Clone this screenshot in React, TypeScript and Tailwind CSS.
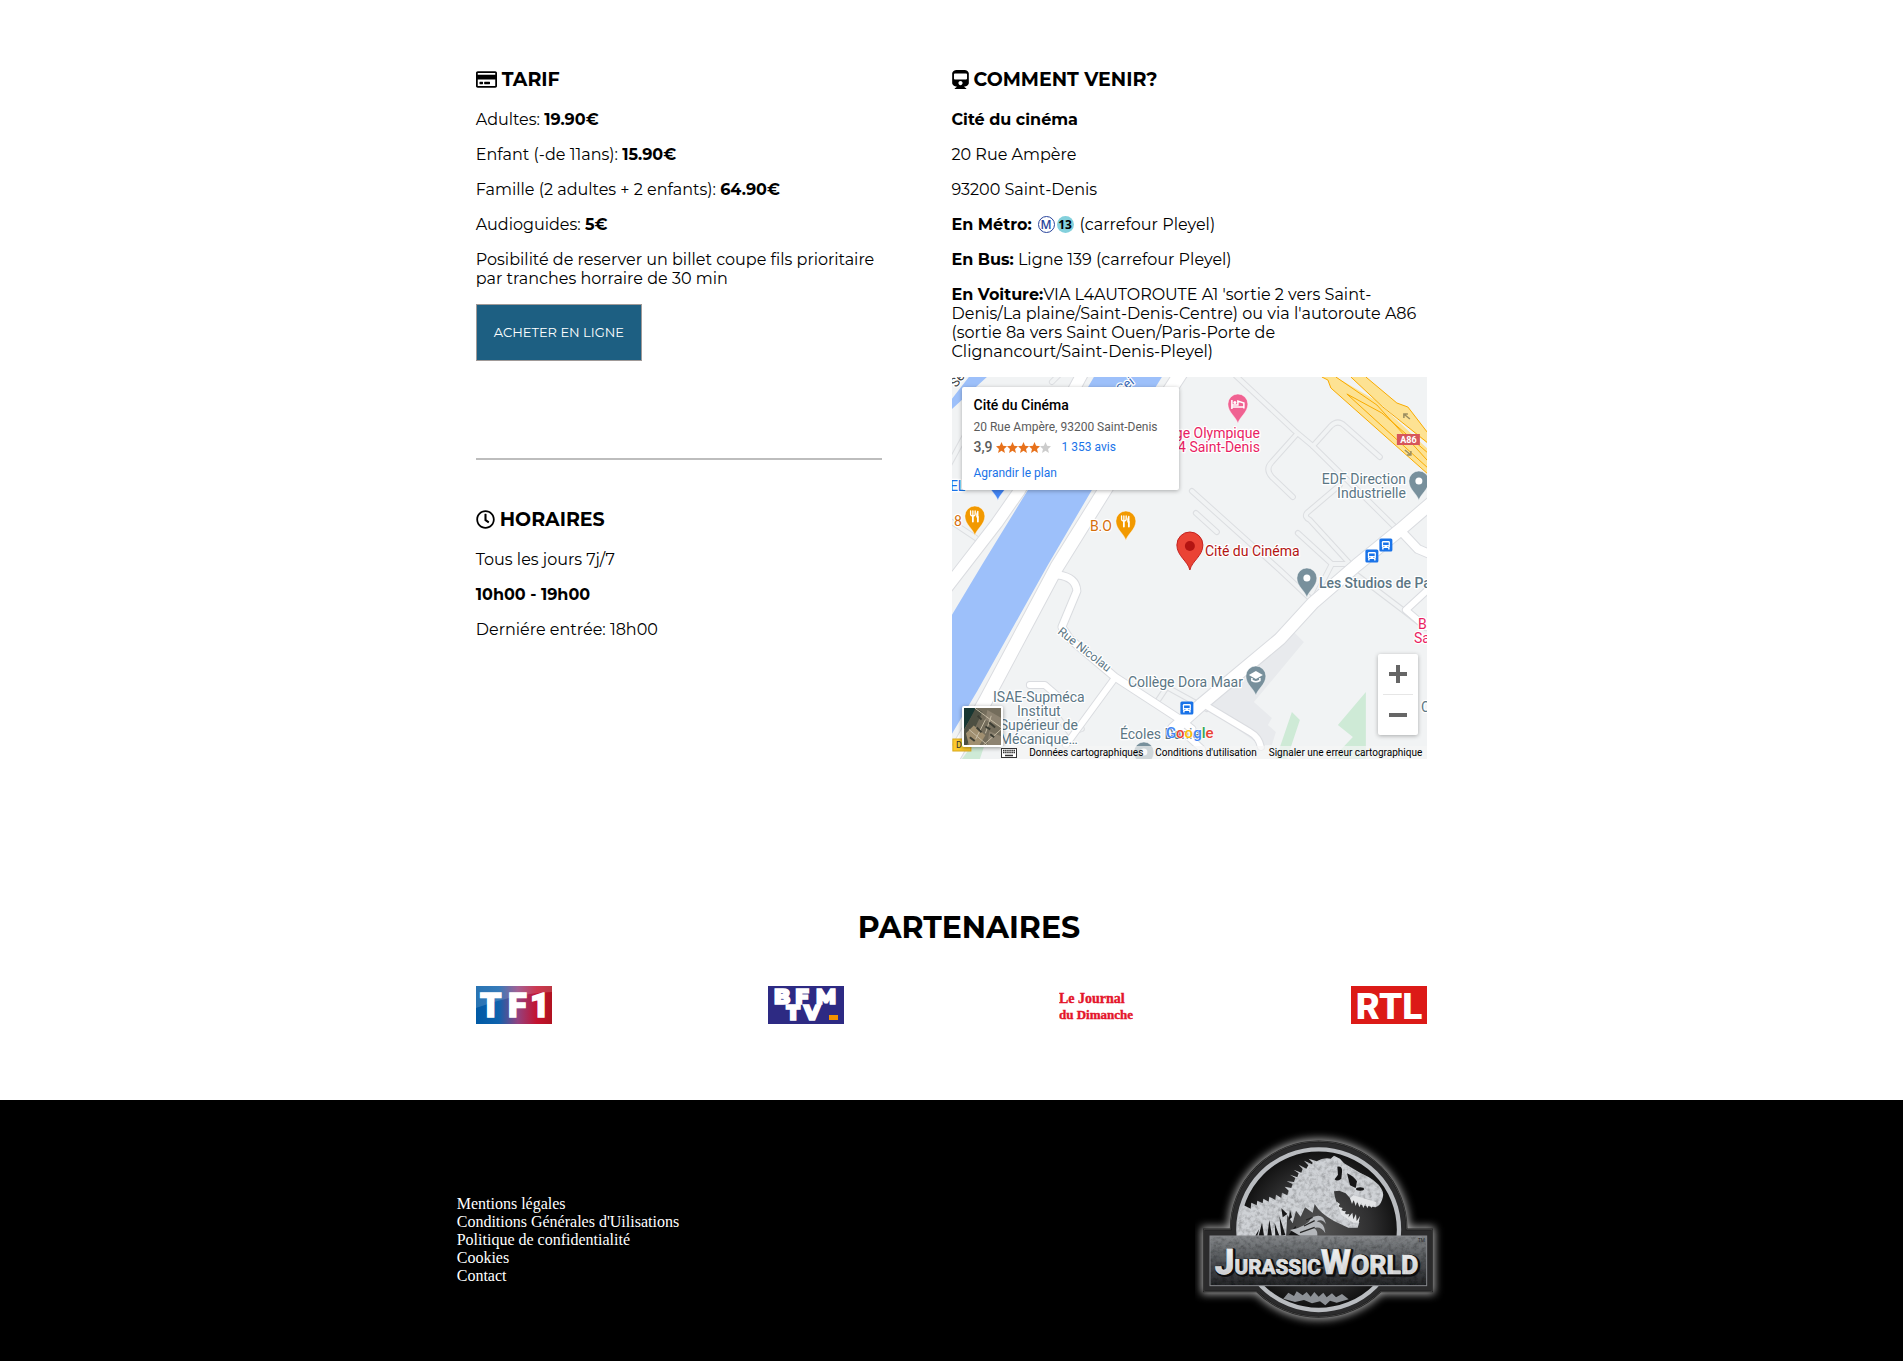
import React from "react";
import { FaRegClock, FaRegCreditCard, FaTrain } from "react-icons/fa";

const SLATE = "#5b7684";

function Pin({ x, y, color, children }: { x: number; y: number; color: string; children?: React.ReactNode }) {
  return (
    <g transform={`translate(${x} ${y})`}>
      <path d="M0 19.500C-1.500 13-10 8.500-10 0a10 10 0 0 1 20 0C10 8.500 1.500 13 0 19.500Z" fill={color} stroke="#fff" strokeOpacity=".6" strokeWidth=".8" />
      {children ?? <circle r="3.500" fill="#fff" />}
    </g>
  );
}

function Fork() {
  return (
    <g fill="none" stroke="#fff" strokeLinecap="round">
      <path d="M-2 0V5.500M3 1V5.500" strokeWidth="1.800" />
      <path d="M-4.300-5V-2Q-4.300 0-2 0T.3-2V-5M-2-5V0" strokeWidth="1.300" />
      <path d="M3-5Q1.500-2 2 1H3Z" fill="#fff" strokeWidth="1.200" />
    </g>
  );
}

function BusStop({ x, y }: { x: number; y: number }) {
  return (
    <g transform={`translate(${x} ${y})`}>
      <rect x="-6.500" y="-6.500" width="13" height="13" rx="1.500" fill="#1a73e8" />
      <rect x="-4" y="-4" width="8" height="7" rx="1.200" fill="#fff" />
      <rect x="-2.800" y="-2.500" width="5.600" height="2.500" fill="#1a73e8" />
      <path d="M-3 3v1.500M3 3v1.500" stroke="#fff" strokeWidth="1.500" />
      <path d="M-2.500 1.400h1M1.500 1.400h1" stroke="#1a73e8" />
    </g>
  );
}

const LANES = [
  "M281-4L343 54L361 69L446 153",
  "M361 69L379 49Q386 42 393 49L428 80",
  "M345 57L320 85Q313 92 320 100L341 120",
  "M388 108L355 136Q352 140 358 143L401 190",
  "M346 156L380 187L361 224",
  "M380 187H394",
  "M240 114L328 193L361 224",
  "M401 195L451 233L470 248",
  "M0 145L30 165M-4 90L15 55M100 5L110-5",
  "M244 136L265 155",
  "M205 325L215 310L255 332",
  "M106 340L118 356L130 352",
];
const ROADS: [string, number][] = [
  ["M132-6L68 113L45 146L-6 212", 11],
  ["M233-10L153 113L105 190L73 250L33 325L-3 388", 13],
  ["M106 198Q124 200 125 214L110 250L118 262L163 300L226 341L240 352", 7],
  ["M163 301L114 368", 6],
  ["M78 308H93L108 321", 6],
  ["M222 352L250 327L328 262L361 226L405 188L448 153L484 122", 12],
  ["M450 155L466 172L480 178", 8],
  ["M480 209L454 233L474 250", 6],
  ["M253 328L298 355Q307 360 309 370", 6],
  ["M228 352L250 372", 6],
];

function CityMap() {
  return (
    <svg viewBox="0 0 476 382" preserveAspectRatio="xMidYMid slice" className="block h-full w-full bg-[#f1f3f4]" role="img" aria-label="Plan du quartier de la Cité du Cinéma">
      <path d="M338 251L352 265L302 325L320 341L316 348L324 355L320 368H308L255 331Z" fill="#e8eaed" />
      <path d="M340 335L348 343L335 382H324ZM414 315V382H380L401 360L386 348ZM10 382L22 366L34 364L28 382Z" fill="#ceead6" />
      <path d="M142 0L76 113L30 188L0 238V357L26 313L68 238L96 188L140 113L210 0ZM17 0H35L0 32V22Z" fill="#9dc0fa" />
      <g fill="none" strokeLinejoin="round" strokeLinecap="round">
        {LANES.map((d) => <path key={d} d={d} stroke="#dcdee1" strokeWidth="6" />)}
        {LANES.map((d) => <path key={d} d={d} stroke="#f1f3f4" strokeWidth="4" />)}
        {ROADS.map(([d, w]) => <path key={d} d={d} stroke="#dadce0" strokeWidth={w + 2} />)}
        {ROADS.map(([d, w]) => <path key={d} d={d} stroke="#fff" strokeWidth={w} />)}
      </g>
      <path d="M370 0L376 3L379 11L441 66L476 97V56L456 30L445 26L414 0Z" fill="#fde293" />
      <path d="M384 0H399L431 30L476 72V67L425 24Z" fill="#f1f3f4" />
      <path d="M370 0L376 3L379 11L441 66L476 97M414 0L445 26L456 30L476 56M384 0L425 28L476 84M399 0L431 30L476 66M395 17L440 58L476 91M395 17L430 36L476 76" fill="none" stroke="#f9ab00" strokeWidth="1" />
      <path d="M458 42L452 37M452 41V37H456M453 73L459 78M459 74V78H455" fill="none" stroke="#9a8d60" strokeWidth="1.500" />
      <rect x="445" y="57" width="23" height="11" fill="#d6555b" />
      <text x="456.500" y="66" textAnchor="middle" fill="#fff" fontSize="9" fontWeight="700">A86</text>
      <rect x="1" y="362" width="18" height="12" fill="#fbc92d" stroke="#d8a81c" />
      <text x="4" y="371" fontSize="9" fill="#333">D</text>

      <BusStop x={434} y={168} />
      <BusStop x={420} y={179} />
      <BusStop x={235} y={331} />
      <Pin x={286} y={27} color="#f06292">
        <path d="M-6-4V5M-6 3H6M6 4.500V-1L0-3V1H-6" fill="none" stroke="#fff" strokeWidth="1.500" />
        <circle cx="-3" cy="-1.500" r="1.500" fill="#fff" />
      </Pin>
      <Pin x={23} y={139} color="#f29900"><Fork /></Pin>
      <Pin x={174} y={144} color="#f29900"><Fork /></Pin>
      <Pin x={46} y={104} color="#4285f4" />
      <Pin x={467} y={104} color="#78909c" />
      <Pin x={355} y={201} color="#78909c" />
      <Pin x={192} y={375} color="#78909c" />
      <Pin x={304} y={299} color="#78909c">
        <path d="M-7-1L0-5L7-1L0 3Z" fill="#fff" />
        <path d="M-4 2V4.500Q0 7 4 4.500V2" fill="none" stroke="#fff" strokeWidth="1.600" />
      </Pin>
      <path d="M238 193C236 184 225 179 225 168a13 13 0 0 1 26 0C251 179 240 184 238 193Z" fill="#ea4335" stroke="#c5221f" />
      <circle cx="238" cy="169" r="5" fill="#b31412" />

      <g fontSize="14" fill={SLATE} stroke="#fff" strokeWidth="2.500" strokeLinejoin="round" paintOrder="stroke">
        <g fill="#e91e63">
          <text x="308" y="61" textAnchor="end">ge Olympique</text>
          <text x="308" y="75" textAnchor="end">4 Saint-Denis</text>
          <text x="466" y="252">Ba</text>
          <text x="462" y="266">Sa</text>
        </g>
        <g fill="#d56e0c">
          <text x="138" y="154">B.O</text>
          <text x="2" y="149">8</text>
        </g>
        <text x="-2" y="114" fill="#1a73e8">EL</text>
        <text x="253" y="179" fill="#b31412">Cité du Cinéma</text>
        <text x="454" y="107" textAnchor="end">EDF Direction</text>
        <text x="454" y="121" textAnchor="end">Industrielle</text>
        <text x="367" y="211" fontWeight="500">Les Studios de Pa</text>
        <text x="469" y="335">C</text>
        <text x="176" y="310">Collège Dora Maar</text>
        <g textAnchor="middle">
          <text x="87" y="325">ISAE-Supméca</text>
          <text x="87" y="339">Institut</text>
          <text x="87" y="353">Supérieur de</text>
          <text x="87" y="367">Mécanique…</text>
        </g>
        <text x="168" y="362">Écoles Danie</text>
        <text transform="translate(105 256) rotate(38)" fontSize="12">Rue Nicolau</text>
        <text transform="translate(4 11) rotate(-50)" fontSize="13" fill="#3c4043">Se</text>
        <text transform="translate(169 17) rotate(-38)" fontSize="13" fill="#3568b8">Sei</text>
      </g>
      <text x="214" y="361" fontSize="15" fontWeight="500" stroke="#fff" strokeWidth="1" paintOrder="stroke">
        <tspan fill="#4285f4">G</tspan><tspan fill="#ea4335">o</tspan><tspan fill="#fbbc05">o</tspan><tspan fill="#4285f4">g</tspan><tspan fill="#34a853">l</tspan><tspan fill="#ea4335">e</tspan>
      </text>
    </svg>
  );
}

function Star({ on }: { on: boolean }) {
  return (
    <svg viewBox="0 0 24 24" className="h-[11px] w-[11px]" aria-hidden="true">
      <path d="M12 0l3.500 8.300 8.500.8-6.500 6 2 8.900-7.500-4.700L4.500 24l2-8.900L0 9.100l8.500-.8Z" fill={on ? "#e7711b" : "#ccc"} />
    </svg>
  );
}

function MapPanel() {
  return (
    <div className="relative h-[382px] overflow-hidden font-['Roboto',sans-serif]">
      <CityMap />
      <div className="absolute left-[10px] top-[10px] h-[103px] w-[217px] rounded-xs bg-white px-3 pt-[9px] shadow-[0_1px_4px_rgba(0,0,0,0.3)]">
        <p className="text-[14px] font-medium leading-[18px]">Cité du Cinéma</p>
        <p className="mt-1 whitespace-nowrap text-[12px] leading-[18px] text-[#5b5b5b]">20 Rue Ampère, 93200 Saint-Denis</p>
        <div className="mt-[2px] flex items-center text-[12px] leading-[18px]">
          <span className="mr-[3px] text-[14px] font-medium text-[#5b5b5b]">3,9</span>
          <span className="flex">{[1, 2, 3, 4, 5].map((n) => <Star key={n} on={n < 5} />)}</span>
          <a href="#avis" className="ml-[11px] text-[#1a73e8]">1 353 avis</a>
        </div>
        <a href="#plan" className="mt-2 block text-[12px] leading-[18px] text-[#1a73e8]">Agrandir le plan</a>
      </div>
      <button aria-label="Vue satellite" className="absolute bottom-3 left-[10px] h-[41px] w-[41px] overflow-hidden rounded-xs border-2 border-white shadow-[0_1px_4px_rgba(0,0,0,0.4)]">
        <svg viewBox="0 0 38 38" className="h-full w-full">
          <rect width="38" height="38" fill="#746d5c" />
          <path d="M0 0H13L0 22Z" fill="#173632" />
          <path d="M12 0L0 23V38H3L19 4Z" fill="#4d4f42" />
          <path d="M2 26L10 18L22 28L16 38H5Z" fill="#a08f70" />
          <path d="M24 2L38 10V20L22 12ZM26 24L38 29V38H24Z" fill="#8d8371" />
          <path d="M11 0L38 20M22 12L12 32M38 22L20 38M5 22L24 38M28 8L22 26" stroke="#c5bca6" strokeWidth="1" />
          <path d="M14 8L18 12M26 15L32 20M13 20L18 25M27 27L31 30M6 30L11 34M22 19L27 22" stroke="#3c3d33" strokeWidth="2" />
        </svg>
      </button>
      <div className="absolute bottom-6 right-[9px] flex w-10 flex-col items-center rounded-xs bg-white shadow-[0_1px_4px_rgba(0,0,0,0.3)]">
        <button aria-label="Zoom avant" className="flex h-10 w-10 items-center justify-center">
          <svg viewBox="0 0 18 18" className="h-[18px] w-[18px]"><path d="M9 0V18M0 9H18" stroke="#666" strokeWidth="4" /></svg>
        </button>
        <span className="h-px w-[30px] bg-[#e6e6e6]" />
        <button aria-label="Zoom arrière" className="flex h-10 w-10 items-center justify-center">
          <svg viewBox="0 0 18 18" className="h-[18px] w-[18px]"><path d="M0 9H18" stroke="#666" strokeWidth="4" /></svg>
        </button>
      </div>
      <div className="absolute bottom-0 right-0 flex h-[13px] items-center whitespace-nowrap bg-[#f5f5f5]/70 pr-[5px] text-[10px] leading-[13px] text-black">
        <svg viewBox="0 0 16 10" className="mr-3 h-[10px] w-4" aria-label="Raccourcis clavier">
          <rect x=".5" y=".5" width="15" height="9" fill="#fff" stroke="#333" />
          <path d="M2 2.500H14M2 4.500H14" stroke="#333" strokeWidth="1.500" strokeDasharray="1.500 .6" />
          <path d="M4 7.500H12" stroke="#333" strokeWidth="1.500" />
        </svg>
        <span className="mr-3">Données cartographiques</span>
        <a href="#conditions" className="mr-3">Conditions d'utilisation</a>
        <a href="#erreur">Signaler une erreur cartographique</a>
      </div>
    </div>
  );
}

function Tf1() {
  return (
    <svg viewBox="0 0 76 38" className="h-[38px] w-[76px]" role="img" aria-label="TF1">
      <defs>
        <linearGradient id="tf1" x1="0" x2="1" y1="0" y2="0">
          <stop offset="0" stopColor="#005aa5" /><stop offset=".3" stopColor="#0f62ad" /><stop offset=".55" stopColor="#94427f" /><stop offset=".8" stopColor="#c4122f" /><stop offset="1" stopColor="#b01220" />
        </linearGradient>
      </defs>
      <rect width="76" height="38" fill="url(#tf1)" />
      <path d="M0 0H76V6Q36 8 0 22Z" fill="#fff" fillOpacity=".16" />
      <g fill="#fff" stroke="#fff" strokeWidth="1.500" fontFamily="Roboto, sans-serif" fontWeight="900" fontSize="34">
        <text x="4" y="31">T</text><text x="32" y="31">F</text><text x="54" y="31">1</text>
      </g>
    </svg>
  );
}

function BfmTv() {
  return (
    <svg viewBox="0 0 76 38" className="h-[38px] w-[76px]" role="img" aria-label="BFM TV">
      <rect width="76" height="38" fill="#2d2a83" />
      <g fill="#fff" stroke="#fff" strokeWidth="1.500" fontFamily="'Montserrat', 'DejaVu Sans', sans-serif" fontWeight="900" fontSize="21" textAnchor="middle">
        <text x="14" y="18">B</text>
        <text x="34" y="18">F</text>
        <text x="58" y="18">M</text>
        <text x="25" y="34">T</text>
        <text x="44" y="34">V</text>
      </g>
      <rect x="61" y="29" width="9" height="5" fill="#f39200" />
    </svg>
  );
}

function Jdd() {
  return (
    <svg viewBox="0 0 76 38" className="h-[38px] w-[76px]" role="img" aria-label="Le Journal du Dimanche">
      <g fill="#e4152b" stroke="#e4152b" strokeWidth=".4" fontFamily="'Liberation Serif', serif" fontWeight="700">
        <text x="0" y="17" fontSize="14">Le Journal</text>
        <text x="0" y="33" fontSize="13">du Dimanche</text>
      </g>
    </svg>
  );
}

function Rtl() {
  return (
    <svg viewBox="0 0 76 38" className="h-[38px] w-[76px]" role="img" aria-label="RTL">
      <rect width="76" height="38" fill="#dc1a17" />
      <text x="38" y="33" textAnchor="middle" fill="#fff" fontFamily="Roboto, sans-serif" fontWeight="900" fontSize="37">RTL</text>
    </svg>
  );
}

function JurassicWorld() {
  const outline = "M72 328H152A264 264 0 0 1 680 328H756V514H602A264 264 0 0 1 230 514H72Z";
  return (
    <svg viewBox="45 30 753 600" className="h-[200px] w-[251px]" role="img" aria-label="Jurassic World">
      <defs>
        <filter id="glow" x="-20%" y="-20%" width="140%" height="140%"><feGaussianBlur stdDeviation="13" /></filter>
        <filter id="grit" x="0" y="0" width="100%" height="100%">
          <feTurbulence type="fractalNoise" baseFrequency=".08" numOctaves="4" result="n" />
          <feColorMatrix in="n" values="0 0 0 0 0  0 0 0 0 0  0 0 0 0 0  1 0 0 0 -.4" />
          <feComposite in2="SourceAlpha" operator="in" result="g" />
          <feMerge><feMergeNode in="SourceGraphic" /><feMergeNode in="g" /></feMerge>
        </filter>
        <radialGradient id="disc"><stop offset="0" stopColor="#555" /><stop offset=".65" stopColor="#2f2f30" /><stop offset="1" stopColor="#101010" /></radialGradient>
        <linearGradient id="plate" x1="0" x2="0" y1="0" y2="1"><stop offset="0" stopColor="#85888b" /><stop offset=".5" stopColor="#505356" /><stop offset="1" stopColor="#242527" /></linearGradient>
        <linearGradient id="letters" x1="0" x2="0" y1="0" y2="1"><stop offset="0" stopColor="#fff" /><stop offset="1" stopColor="#bfc1c3" /></linearGradient>
      </defs>
      <path d={outline} fill="#aaa" stroke="#aaa" strokeWidth="16" filter="url(#glow)" />
      <path d={outline} fill="#2b2b2c" stroke="#161616" strokeWidth="5" />
      <path d={outline} fill="none" stroke="#555" strokeWidth="2" />
      <circle cx="416" cy="329" r="241" fill="url(#disc)" />
      <circle cx="416" cy="329" r="241" fill="none" stroke="#b9bcc0" strokeWidth="13" />
      <path d="M310 536L325 518L342 528L350 514L368 526L380 516L392 530L403 516L416 530L430 518L440 532L456 520L468 532L486 522L506 538L470 548L450 542L436 556L420 544L396 550L372 540L345 546Z" fill="#8d9196" />
      <g filter="url(#grit)">
        <path fill="#cfd2d6" d="M172 352L174 300Q176 272 190 255L212 266L214 248L230 256L232 242L248 250L250 236L266 245L268 230L286 240L288 224L304 234L306 218L322 226L326 212L314 200L334 204L338 192L320 184L342 186L346 174L330 164L352 172L356 160L341 149L364 158L368 147L356 134L379 146L385 136L372 122L396 133L398 128L386 116L410 124Q430 112 452 116L462 107L480 116L492 130L540 158Q590 180 604 206Q614 222 606 240Q600 258 586 262L545 255L512 236L497 220L478 212L462 214Q464 244 482 266L512 296L538 306L533 323L505 323L462 303Q420 280 404 252L398 278L375 262L362 290L348 272L338 310L322 285L318 352Z" />
      </g>
      <g fill="#161617">
        <path d="M472 140Q488 138 486 156L484 176Q470 186 464 178L474 164Z" />
        <path d="M501 160Q520 168 531 184L527 204L510 196Z" />
        <ellipse cx="540" cy="207" rx="12" ry="5" />
        <path d="M236 347L246 308L252 347ZM262 347L268 300L276 347ZM286 347L284 310L298 347ZM304 347L298 288L316 345ZM304 265L322 282L308 292ZM330 270L336 292L326 300ZM326 345L346 318L362 347ZM238 326L226 347H232Z" />
      </g>
      <path d="M330 330Q380 322 396 292Q430 276 438 312Q426 294 410 304Q434 308 436 340Q424 318 402 324Q414 332 412 347H360Z" fill="#b4b7bb" />
      <path d="M372 318L404 302M360 338L404 322M378 300L398 292" stroke="#262626" strokeWidth="4" />
      <path d="M510 235L516 252L521 240L527 258L532 244L538 262L544 248L550 264L556 251L562 265L568 252L574 264L580 254L586 262L588 246L520 226Z" fill="#e2e4e6" />
      <path d="M470 245L480 252L474 260L488 264L482 272L498 274L492 284L508 282L504 294L517 278L520 298L528 282L530 304L540 288L536 308H520L484 284Z" fill="#e2e4e6" />
      <rect x="90" y="348" width="650" height="149" fill="url(#plate)" filter="url(#grit)" />
      <rect x="90" y="348" width="650" height="149" fill="none" stroke="#85888b" strokeWidth="3" />
      <g fontFamily="Roboto, sans-serif" fontWeight="800" strokeLinejoin="round" textRendering="geometricPrecision">
        <g fill="#0d0d0d" stroke="#0d0d0d" strokeWidth="10">
          <text x="108" y="464"><tspan fontSize="106">J</tspan><tspan fontSize="62">URASSIC</tspan></text>
          <text x="426" y="464"><tspan fontSize="104">W</tspan><tspan fontSize="80">ORLD</tspan></text>
        </g>
        <g fill="url(#letters)" stroke="#e6e7e8" strokeWidth="2">
          <text x="104" y="461"><tspan fontSize="106">J</tspan><tspan fontSize="62">URASSIC</tspan></text>
          <text x="422" y="461"><tspan fontSize="104">W</tspan><tspan fontSize="80">ORLD</tspan></text>
        </g>
      </g>
      <text x="714" y="366" fontSize="14" fill="#222" fontFamily="Roboto, sans-serif">TM</text>
    </svg>
  );
}

const FOOTER_LINKS = ["Mentions légales", "Conditions Générales d'Uilisations", "Politique de confidentialité", "Cookies", "Contact"];

const HEADING = "mb-[19px] flex items-center gap-[5px] text-[19px] font-bold leading-[23px]";

export default function App() {
  return (
    <div className="flex min-h-screen flex-col bg-white font-['Montserrat','Inter',sans-serif] text-[16px] leading-[19px] text-black">
      <main className="mx-auto w-1/2 pt-[68px]">
        <div className="flex">
          <div className="w-1/2 pr-[70px]">
            <section className="space-y-4">
              <h3 className={HEADING}><FaRegCreditCard className="h-[19px] w-[21px]" />TARIF</h3>
              <p>Adultes: <b>19.90€</b></p>
              <p>Enfant (-de 11ans): <b>15.90€</b></p>
              <p>Famille (2 adultes + 2 enfants): <b>64.90€</b></p>
              <p>Audioguides: <b>5€</b></p>
              <p>Posibilité de reserver un billet coupe fils prioritaire par tranches horraire de 30 min</p>
              <button className="block h-[57px] border border-[#a09a98] bg-[#1d5f82] px-[17px] text-[13px] text-white">ACHETER EN LIGNE</button>
            </section>
            <hr className="mb-12 mt-[97px] border-t-2 border-[#bdbdbd]" />
            <section className="space-y-4">
              <h3 className={HEADING}><FaRegClock className="h-[19px] w-[19px]" />HORAIRES</h3>
              <p>Tous les jours 7j/7</p>
              <p><b>10h00 - 19h00</b></p>
              <p>Derniére entrée: 18h00</p>
            </section>
          </div>
          <section className="w-1/2 space-y-4">
            <h3 className={HEADING}><FaTrain className="h-[19px] w-[17px]" />COMMENT VENIR?</h3>
            <p><b>Cité du cinéma</b></p>
            <p>20 Rue Ampère</p>
            <p>93200 Saint-Denis</p>
            <p className="flex items-center">
              <b>En Métro:</b>
              <span className="ml-[6px] flex h-[17px] w-[17px] items-center justify-center rounded-full border border-[#27439b] font-['Open_Sans'] text-[12px] font-semibold text-[#27439b]">M</span>
              <span className="ml-[2px] mr-[6px] flex h-[17px] w-[17px] items-center justify-center rounded-full bg-[#83d0dc] font-['Open_Sans'] text-[12px] font-bold">13</span>
              (carrefour Pleyel)
            </p>
            <p><b>En Bus:</b> Ligne 139 (carrefour Pleyel)</p>
            <p><b>En Voiture:</b>VIA L4AUTOROUTE A1 'sortie 2 vers Saint-Denis/La plaine/Saint-Denis-Centre) ou via l'autoroute A86 (sortie 8a vers Saint Ouen/Paris-Porte de Clignancourt/Saint-Denis-Pleyel)</p>
            <MapPanel />
          </section>
        </div>
        <h2 className="mt-[149px] pl-[35px] text-center text-[30px] font-bold leading-[39px]">PARTENAIRES</h2>
        <div className="mb-[76px] mt-[39px] flex justify-between">
          <Tf1 /><BfmTv /><Jdd /><Rtl />
        </div>
      </main>
      <footer className="flex flex-1 items-start justify-between bg-black px-[24%] pt-[30px] font-['Liberation_Serif',serif] leading-[18px] text-white">
        <ul className="pt-[65px]">
          {FOOTER_LINKS.map((t) => <li key={t}><a href="#">{t}</a></li>)}
        </ul>
        <JurassicWorld />
      </footer>
    </div>
  );
}
